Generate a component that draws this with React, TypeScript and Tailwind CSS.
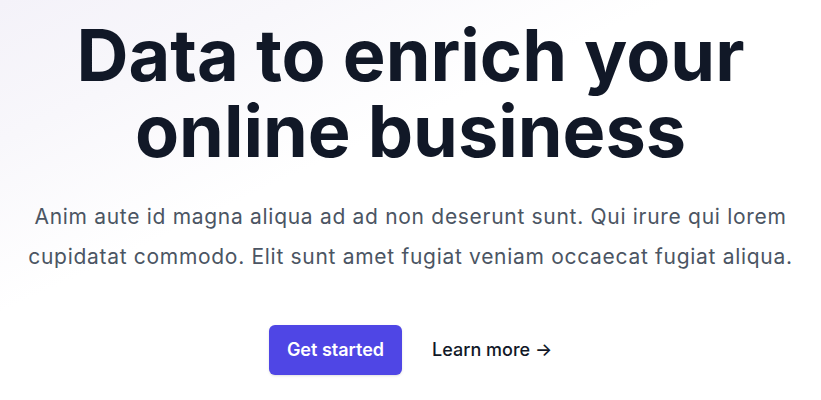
import React from 'react';

export default function App() {
  return (
    <div className="relative isolate min-h-[400px] overflow-hidden bg-white font-['Inter',sans-serif]">
      <div className="absolute inset-0 -z-10 bg-[linear-gradient(155deg,#f4f2f9_0%,#f8f7fb_18%,#ffffff_40%)]" />
      <div className="mx-auto flex flex-col items-center pt-[17px] text-center">
        <h1 className="text-[72px] font-bold leading-[76px] text-[#111827]">
          Data to enrich your
          <br />
          online business
        </h1>
        <p className="mt-7 text-[21px] leading-10 tracking-[0.7px] text-[#4b5563]">
          Anim aute id magna aliqua ad ad non deserunt sunt. Qui irure qui lorem
          <br />
          cupidatat commodo. Elit sunt amet fugiat veniam occaecat fugiat aliqua.
        </p>
        <div className="mt-12 flex items-center gap-x-[30px]">
          <a
            href="#"
            className="rounded-md bg-[#4f46e5] px-[18px] py-[13px] text-lg font-semibold leading-6 text-white shadow-sm"
          >
            Get started
          </a>
          <a href="#" className="text-lg font-medium leading-6 text-[#111827]">
            Learn more <span aria-hidden="true">→</span>
          </a>
        </div>
      </div>
    </div>
  );
}
